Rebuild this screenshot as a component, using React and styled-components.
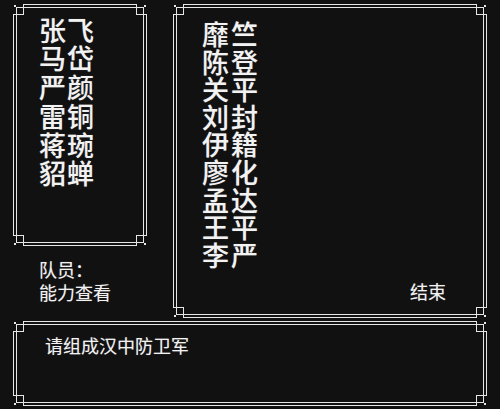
import React from 'react'
import styled, { createGlobalStyle } from 'styled-components'

const LINE = '#e6e6e6'
const BG = '#111111'

const GlobalStyle = createGlobalStyle`
  html, body {
    margin: 0;
    padding: 0;
    background: ${BG};
  }
  body {
    font-family: "Noto Sans CJK SC", "Noto Sans", sans-serif;
    color: #f2f2f2;
  }
`

const Screen = styled.div`
  width: 500px;
  height: 409px;
  box-sizing: border-box;
  padding: 4px 13px 0 13px;
  display: flex;
  flex-direction: column;
  background: ${BG};
  overflow: hidden;
`

const TopRow = styled.div`
  display: flex;
  gap: 26px;
  height: 314px;
`

const LeftColumn = styled.div`
  width: 134px;
  display: flex;
  flex-direction: column;
`

const Panel = styled.div`
  position: relative;
  box-sizing: border-box;
  border: 1px solid ${LINE};
  height: ${({ $h }) => $h}px;
  &::before {
    content: '';
    position: absolute;
    inset: 2px;
    border: 1px solid ${LINE};
    pointer-events: none;
  }
`

const RightPanel = styled(Panel)`
  flex: 1;
  display: flex;
  flex-direction: column;
  justify-content: space-between;
  padding: 15px 40px 17px 28px;
`

const BottomPanel = styled(Panel)`
  margin-top: 3px;
  padding: 14px 0 0 31px;
`

const CornerBox = styled.div`
  position: absolute;
  width: 12px;
  height: 12px;
  background: ${BG};
  z-index: 1;
  ${({ $pos }) => ($pos[0] === 't' ? 'top: -1px;' : 'bottom: -1px;')}
  ${({ $pos }) => ($pos[1] === 'l' ? 'left: -1px;' : 'right: -1px;')}
  transform: ${({ $pos }) =>
    `scale(${$pos[1] === 'l' ? 1 : -1}, ${$pos[0] === 't' ? 1 : -1})`};
  svg {
    display: block;
  }
`

const Corner = ({ pos }) => (
  <CornerBox $pos={pos}>
    <svg width="12" height="12" viewBox="0 0 12 12" shapeRendering="crispEdges">
      <path d="M0.5 12V10.5H10.5V0.5H12" fill="none" stroke={LINE} strokeWidth="1" />
      <path d="M3.5 12V3.5H12" fill="none" stroke={LINE} strokeWidth="1" />
      <rect x="1" y="1" width="2" height="2" fill={LINE} />
    </svg>
  </CornerBox>
)

const Corners = () => (
  <>
    <Corner pos="tl" />
    <Corner pos="tr" />
    <Corner pos="bl" />
    <Corner pos="br" />
  </>
)

const NameList = styled.div`
  font-size: 27px;
  font-weight: 500;
  line-height: ${({ $pitch }) => $pitch}px;
  letter-spacing: ${({ $gap }) => $gap}px;
  padding: ${({ $pad }) => $pad};
  text-shadow: 0 0 1px rgba(255, 255, 255, 0.35);
`

const Name = styled.div`
  white-space: nowrap;
`

const Status = styled.div`
  margin-top: 12px;
  padding-left: 26px;
  font-size: 18px;
  line-height: 23px;
  text-shadow: 0 0 1px rgba(255, 255, 255, 0.35);
`

const SmallText = styled.div`
  font-size: 18px;
  line-height: 18px;
  white-space: nowrap;
  text-shadow: 0 0 1px rgba(255, 255, 255, 0.35);
`

const EndButton = styled(SmallText)`
  align-self: flex-end;
`

const team = ['张飞', '马岱', '严颜', '雷铜', '蒋琬', '貂蝉']
const pool = ['靡竺', '陈登', '关平', '刘封', '伊籍', '廖化', '孟达', '王平', '李严']

const App = () => {
  return (
    <>
      <GlobalStyle />
      <Screen>
        <TopRow>
          <LeftColumn>
            <Panel $h={242}>
              <Corners />
              <NameList $pitch={28.75} $gap={1} $pad="10.5px 0 0 25px">
                {team.map((n) => (
                  <Name key={n}>{n}</Name>
                ))}
              </NameList>
            </Panel>
            <Status>
              <div>队员：</div>
              <div>能力查看</div>
            </Status>
          </LeftColumn>
          <RightPanel $h={314}>
            <Corners />
            <NameList $pitch={27.6} $gap={2} $pad="0">
              {pool.map((n) => (
                <Name key={n}>{n}</Name>
              ))}
            </NameList>
            <EndButton>结束</EndButton>
          </RightPanel>
        </TopRow>
        <BottomPanel $h={85}>
          <Corners />
          <SmallText>请组成汉中防卫军</SmallText>
        </BottomPanel>
      </Screen>
    </>
  )
}

export default App
